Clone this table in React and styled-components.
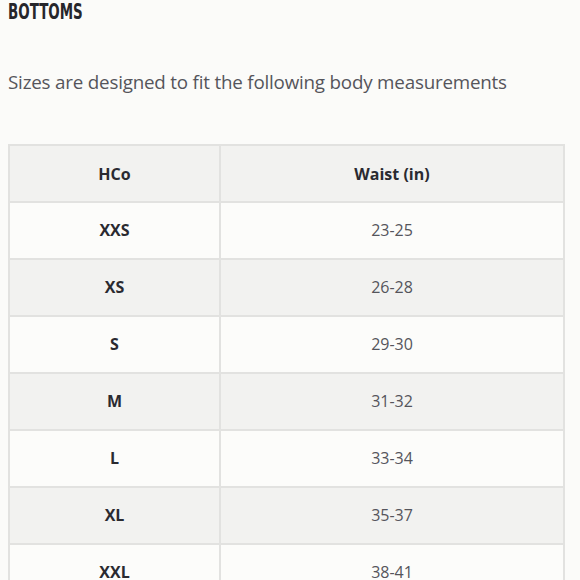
import React from 'react';
import styled, { createGlobalStyle } from 'styled-components';

const GlobalStyle = createGlobalStyle`
  body {
    margin: 0;
    background: #fbfbf9;
  }
`;

const Page = styled.div`
  width: 580px;
  height: 580px;
  overflow: hidden;
  padding: 0 15px 0 8px;
  box-sizing: border-box;
`;

const Title = styled.h2`
  margin: 0;
  font-family: "DejaVu Sans", sans-serif;
  font-weight: 700;
  font-size: 21px;
  line-height: 24px;
  color: #26262b;
  transform: scaleX(0.64);
  transform-origin: left center;
`;

const Intro = styled.p`
  margin: 45px 0 0;
  font-family: "Open Sans", sans-serif;
  font-size: 18.8px;
  line-height: 26px;
  color: #55555b;
  letter-spacing: -0.2px;
`;

const Table = styled.table`
  margin-top: 49px;
  width: 557px;
  border-collapse: collapse;
  font-family: "Open Sans", sans-serif;
  font-size: 16px;
`;

const Row = styled.tr`
  height: 57px;
  background: ${(p) => (p.$shaded ? '#f2f2f0' : '#fcfcfa')};
`;

const HeadCell = styled.th`
  border: 2px solid #e2e2e0;
  font-weight: 700;
  color: #2a2a30;
  text-align: center;
  width: ${(p) => p.$w || 'auto'};
`;

const Cell = styled.td`
  border: 2px solid #e2e2e0;
  text-align: center;
  padding-bottom: 3px;
  font-weight: ${(p) => (p.$bold ? 700 : 400)};
  color: ${(p) => (p.$bold ? '#2a2a30' : '#55555b')};
`;

const sizes = [
  ['XXS', '23-25'],
  ['XS', '26-28'],
  ['S', '29-30'],
  ['M', '31-32'],
  ['L', '33-34'],
  ['XL', '35-37'],
  ['XXL', '38-41'],
];

export default function App() {
  return (
    <Page>
      <GlobalStyle />
      <Title>BOTTOMS</Title>
      <Intro>Sizes are designed to fit the following body measurements</Intro>
      <Table>
        <thead>
          <Row $shaded>
            <HeadCell $w="207px">HCo</HeadCell>
            <HeadCell>Waist (in)</HeadCell>
          </Row>
        </thead>
        <tbody>
          {sizes.map(([size, waist], i) => (
            <Row key={size} $shaded={i % 2 === 1}>
              <Cell $bold>{size}</Cell>
              <Cell>{waist}</Cell>
            </Row>
          ))}
        </tbody>
      </Table>
    </Page>
  );
}
